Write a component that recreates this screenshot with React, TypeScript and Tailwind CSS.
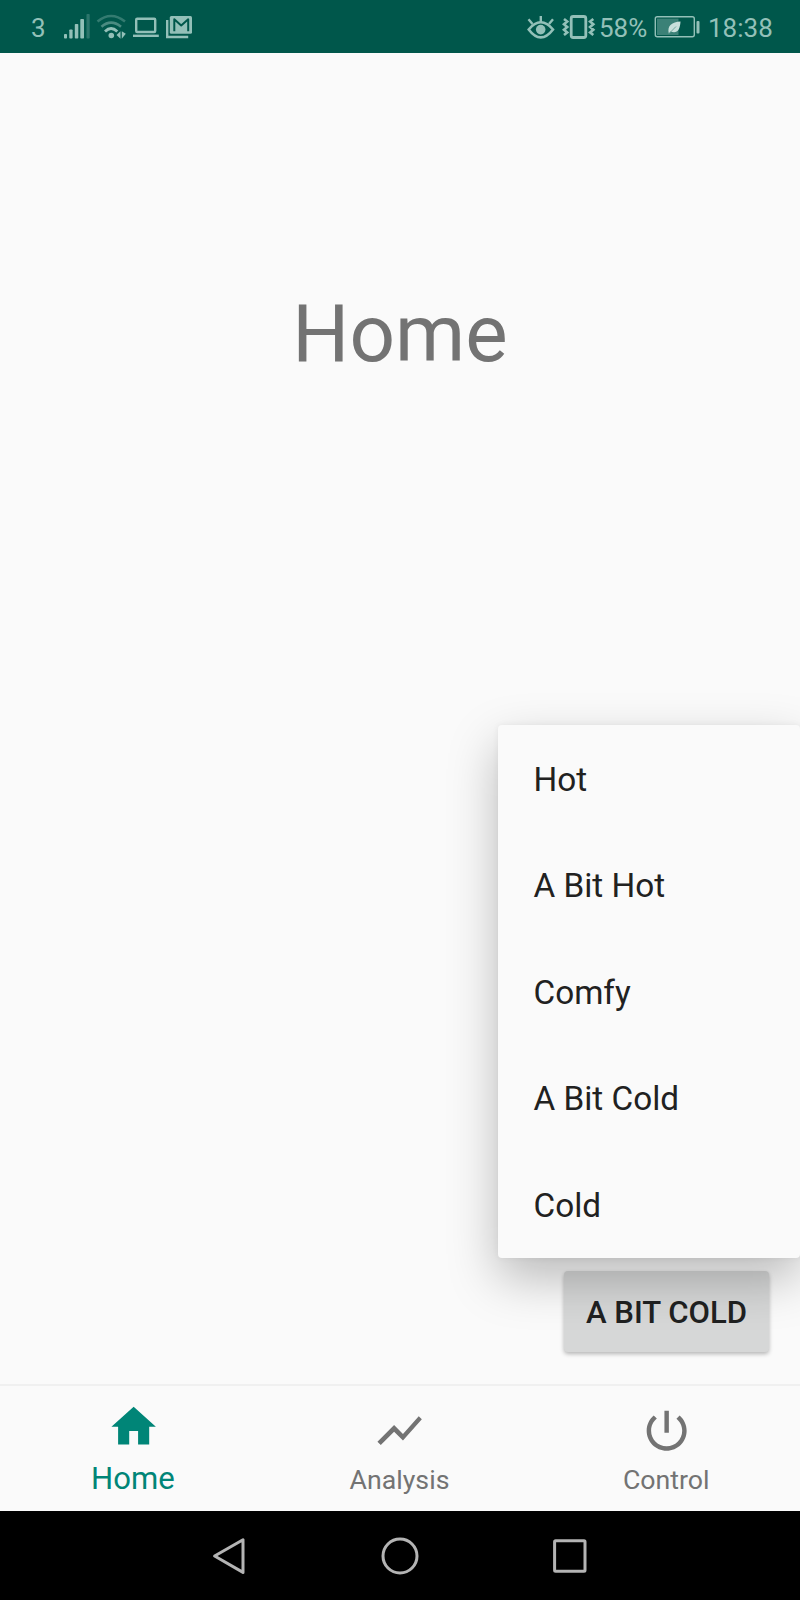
import type { ReactNode } from "react";

const moods = ["Hot", "A Bit Hot", "Comfy", "A Bit Cold", "Cold"];

function StatusBar() {
  return (
    <header className="flex h-[53px] shrink-0 justify-between bg-[#00574b] pr-[26px] pl-[31px] text-[#93c0b8]">
      <div className="flex">
        <span className="w-[31px] pt-[13px] text-[26px] leading-[30px]">3</span>
        <svg viewBox="62 0 32 53" className="h-[53px] w-8" fill="currentColor">
          <rect x="64" y="34" width="3" height="4.5" rx="0.8" />
          <rect x="69.3" y="29.5" width="3.3" height="9" rx="0.8" />
          <rect x="74.8" y="24" width="3.5" height="14.5" rx="0.8" />
          <rect x="80.3" y="19" width="3.7" height="19.5" rx="0.8" />
          <rect x="86.5" y="14" width="3.2" height="24.5" rx="0.8" opacity="0.3" />
        </svg>
        <svg viewBox="94 0 36 53" className="h-[53px] w-9" fill="none" stroke="currentColor">
          <path d="M97.5 21.5Q111 10.5 125 21.5" strokeWidth="2.6" opacity="0.35" />
          <path d="M101.5 26.7Q111 18.5 121 26.7" strokeWidth="2.6" opacity="0.5" />
          <path d="M105 31.5Q111 25.5 117.3 31.5" strokeWidth="2.8" />
          <circle cx="111.3" cy="35.5" r="2.8" fill="currentColor" stroke="none" />
          <path d="M120.5 31.3v7.5l-4-3.7zM121.8 31.3v7.5l4-5z" fill="currentColor" stroke="none" />
        </svg>
        <svg viewBox="130 0 32 53" className="h-[53px] w-8" fill="none" stroke="currentColor">
          <rect x="136.2" y="18.7" width="19" height="13.3" rx="1" strokeWidth="2.4" />
          <path d="M133 35.8h25.8" strokeWidth="2.4" />
        </svg>
        <svg viewBox="162 0 34 53" className="h-[53px] w-[34px]" fill="none" stroke="currentColor">
          <path d="M167.2 20v17h21" strokeWidth="2.4" />
          <rect x="169.8" y="16" width="22.2" height="17.8" rx="1.5" fill="currentColor" stroke="none" />
          <path d="M174.3 31.3V19.3L181.2 25.4l7-6.1v12" stroke="#00574b" strokeWidth="2" strokeLinejoin="round" />
        </svg>
      </div>
      <div className="flex">
        <svg viewBox="524 0 34 53" className="h-[53px] w-[34px]" fill="none" stroke="currentColor">
          <path d="M528.7 29.5Q534.5 22.3 540.8 22.3T553 29.5Q547 37.4 540.8 37.4T528.7 29.5Z" strokeWidth="2.6" />
          <circle cx="540.7" cy="29.6" r="4.8" fill="currentColor" stroke="none" />
          <path d="M540.8 22v-6M532.5 24l-4-4.8M549 24l4-4.8" strokeWidth="2.4" />
        </svg>
        <svg viewBox="558 0 40 53" className="h-[53px] w-10" fill="none" stroke="currentColor">
          <rect x="571.2" y="16.5" width="14.6" height="21" rx="2" strokeWidth="2.8" />
          <path d="M564 19l3.2 2.6-3.2 2.7 3.2 2.7-3.2 2.7 3.2 2.7-3.2 2.6M593.3 19l-3.2 2.6 3.2 2.7-3.2 2.7 3.2 2.7-3.2 2.7 3.2 2.6" strokeWidth="2.6" />
        </svg>
        <span className="w-[52px] pt-[13px] pl-[1px] text-[26px] leading-[30px]">58%</span>
        <svg viewBox="650 0 58 53" className="h-[53px] w-[58px]" fill="none" stroke="currentColor">
          <rect x="655.3" y="16.8" width="39" height="20" rx="2" strokeWidth="1.4" />
          <rect x="657" y="18.6" width="21.5" height="16.4" fill="currentColor" stroke="none" opacity="0.4" />
          <path d="M668.8 33.5C667 25.5 672 22 680.5 21.5C680 30 677 34 670.6 31.5Z" fill="#c9e0dc" stroke="none" />
          <path d="M668.8 33.8L676 26.5" stroke="#5d9a90" strokeWidth="0.8" />
          <rect x="696.5" y="21" width="3" height="12.5" rx="1" fill="currentColor" stroke="none" />
        </svg>
        <time className="w-[66px] pt-[13px] text-[26px] leading-[30px]">18:38</time>
      </div>
    </header>
  );
}

function Tab({ label, active = false, children }: { label: string; active?: boolean; children: ReactNode }) {
  return (
    <button
      className={
        active
          ? "flex flex-1 flex-col items-center pt-[14px] text-[#008577]"
          : "flex flex-1 flex-col items-center pt-[18px] text-[#737373]"
      }
    >
      <svg viewBox="0 0 24 24" className="size-[53.3px]" fill="currentColor">
        {children}
      </svg>
      <span
        className={
          active
            ? "mt-[7.7px] mr-px text-[31.1px] leading-9"
            : "mt-[6.7px] mr-px text-[26.7px] leading-8"
        }
      >
        {label}
      </span>
    </button>
  );
}

function SystemNav() {
  return (
    <footer className="flex h-[89px] shrink-0 items-center justify-center gap-[130px] bg-black text-[#b4b4b4]">
      <svg viewBox="0 0 40 40" className="size-10" fill="none" stroke="currentColor" strokeWidth="3" strokeLinejoin="round">
        <path d="M4.6 20L33 3.8v32.6Z" />
      </svg>
      <svg viewBox="0 0 40 40" className="size-10" fill="none" stroke="currentColor" strokeWidth="3">
        <circle cx="20" cy="20" r="17" />
      </svg>
      <svg viewBox="0 0 40 40" className="size-10" fill="none" stroke="currentColor" strokeWidth="3">
        <rect x="4.6" y="4.8" width="30.4" height="30.4" rx="1" />
      </svg>
    </footer>
  );
}

export default function App() {
  return (
    <div className="flex h-[1600px] w-[800px] flex-col overflow-hidden bg-[#fafafa] font-['Roboto',sans-serif]">
      <StatusBar />
      <main className="relative flex flex-1 flex-col items-center justify-between">
        <h1 className="mt-[234px] text-[80px] leading-[94px] text-[#737373]">Home</h1>
        <button className="mr-[31px] mb-[32px] h-[81px] w-[205px] self-end rounded-[4px] bg-[#d6d7d7] pt-[3px] text-[31.1px] font-medium text-[#202121] shadow-[0_2px_4px_rgba(0,0,0,0.28)]">
          A BIT COLD
        </button>
        <ul className="absolute top-[671.7px] right-0 w-[302px] rounded-[4px] bg-[#fafafa] text-[#212121] shadow-[0_20px_50px_rgba(0,0,0,0.26),0_0_6px_rgba(0,0,0,0.06)]">
          {moods.map((mood) => (
            <li key={mood} className="flex h-[106.6px] items-center pt-[3px] pl-[35.5px] text-[33.3px]">
              {mood}
            </li>
          ))}
        </ul>
      </main>
      <nav className="flex h-[127px] shrink-0 border-t-2 border-[#f0f0f0]">
        <Tab label="Home" active>
          <path d="M10 20v-6h4v6h5v-8h3L12 3 2 12h3v8z" />
        </Tab>
        <Tab label="Analysis">
          <path d="M3.5 18.49l6-6.01 4 4L22 6.92l-1.41-1.41-7.09 7.97-4-4L2 16.99z" />
        </Tab>
        <Tab label="Control">
          <path d="M13 3h-2v10h2V3zm4.83 2.17l-1.42 1.42C17.99 7.86 19 9.81 19 12c0 3.87-3.13 7-7 7s-7-3.13-7-7c0-2.19 1.01-4.14 2.58-5.42L6.17 5.17C4.23 6.82 3 9.26 3 12c0 4.97 4.03 9 9 9s9-4.03 9-9c0-2.74-1.23-5.18-3.17-6.83z" />
        </Tab>
      </nav>
      <SystemNav />
    </div>
  );
}
